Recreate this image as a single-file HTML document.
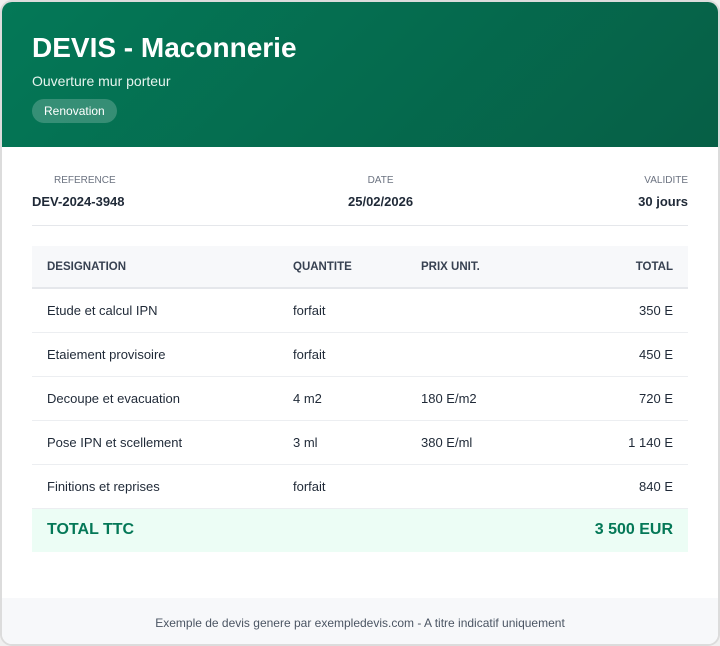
<!DOCTYPE html>
<html><head><meta charset="utf-8"><style>
*{box-sizing:border-box;margin:0;padding:0}
body{width:720px;height:646px;background:#f0f0f0;font-family:"Liberation Sans",sans-serif;overflow:hidden}
.card{position:absolute;left:0;top:0;width:720px;height:646px;border:2px solid #dcdcdc;border-radius:12px;background:#fff;overflow:hidden}
.hd{height:145px;background:linear-gradient(135deg,#047857,#065f46);padding:30px 30px 0;color:#fff}
.hd h1{font-size:28px;font-weight:bold;line-height:32px;letter-spacing:0}
.hd .sub{font-size:14px;margin-top:9px;color:#e6f4ee}
.badge{display:inline-block;margin-top:10px;height:24px;line-height:24px;padding:0 12px;border-radius:12px;background:rgba(255,255,255,.2);font-size:12px}
.meta{position:absolute;top:173px;left:30px;width:656px;height:51px;border-bottom:1px solid #e5e7eb;font-size:13px}
.meta div{position:absolute;top:0}
.lab{font-size:10px;color:#6b7280;text-transform:uppercase;display:block;margin-bottom:8px}
.val{font-weight:bold;color:#1f2937}
table{position:absolute;top:244px;left:30px;width:656px;border-collapse:collapse;font-size:13px;color:#1f2937}
th{height:42px;background:#f7f8fa;border-bottom:2px solid #e5e7eb;font-size:11.5px;color:#374151;text-align:left;font-weight:bold;padding-left:15px}
td{height:44px;border-bottom:1px solid #eceef1;padding-left:15px}
.r{text-align:right;padding-right:15px}
tr.tot td{height:44px;background:#ecfdf5;color:#047857;font-weight:bold;font-size:16px;border:none}
.ft{position:absolute;bottom:0;left:0;right:0;height:46px;background:#f7f8fa;text-align:center;line-height:50px;font-size:12px;color:#4b5563}
</style></head><body><div class="card">
<div class="hd"><h1>DEVIS - Maconnerie</h1><div class="sub">Ouverture mur porteur</div><div class="badge">Renovation</div></div>
<div class="meta">
<div style="left:0"><span class="lab" style="padding-left:22px">Reference</span><span class="val">DEV-2024-3948</span></div>
<div style="left:316px;text-align:center"><span class="lab">Date</span><span class="val">25/02/2026</span></div>
<div style="right:0;text-align:right"><span class="lab">Validite</span><span class="val">30 jours</span></div>
</div>
<table>
<tr><th style="width:246px">DESIGNATION</th><th style="width:128px">QUANTITE</th><th>PRIX UNIT.</th><th class="r">TOTAL</th></tr>
<tr><td>Etude et calcul IPN</td><td>forfait</td><td></td><td class="r">350 E</td></tr>
<tr><td>Etaiement provisoire</td><td>forfait</td><td></td><td class="r">450 E</td></tr>
<tr><td>Decoupe et evacuation</td><td>4 m2</td><td>180 E/m2</td><td class="r">720 E</td></tr>
<tr><td>Pose IPN et scellement</td><td>3 ml</td><td>380 E/ml</td><td class="r">1 140 E</td></tr>
<tr><td>Finitions et reprises</td><td>forfait</td><td></td><td class="r">840 E</td></tr>
<tr class="tot"><td colspan="2">TOTAL TTC</td><td></td><td class="r">3 500 EUR</td></tr>
</table>
<div class="ft">Exemple de devis genere par exempledevis.com - A titre indicatif uniquement</div>
</div></body></html>
